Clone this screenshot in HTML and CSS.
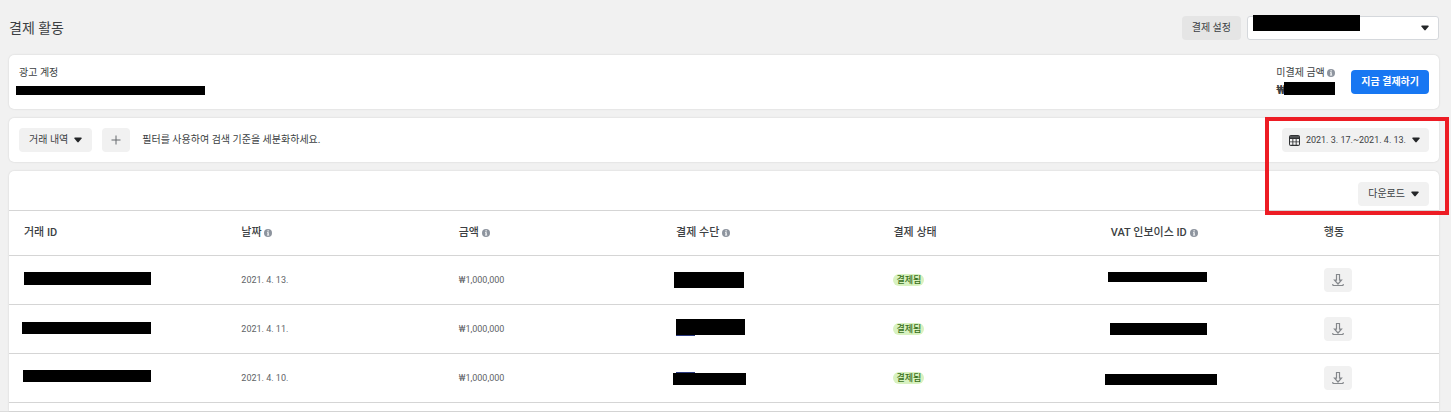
FILE: index.html
```html
<!DOCTYPE html>
<html lang="ko">
<head>
    <meta charset="UTF-8">
    <meta name="viewport" content="width=device-width, initial-scale=1">
    <title>결제 활동</title>
    <link rel="stylesheet" href="styles.css">
</head>
<body>
    <svg class="sprite" aria-hidden="true">
        <symbol id="caret" viewBox="0 0 8 6">
            <path d="M1 .5h6q1 0 .6 1L4.7 5.1q-.7.7-1.4 0L.4 1.5Q0 .5 1 .5z" fill="currentColor"/>
        </symbol>
        <symbol id="info" viewBox="0 0 8 8">
            <circle cx="4" cy="4" r="4" fill="#8d949e"/>
            <path d="M3.5 1.3h1.2v1.2H3.5zM3 3.2h1.7v2.5h.5v.8H3v-.8h.5V4H3z" fill="#fff"/>
        </symbol>
        <symbol id="download" viewBox="0 0 12 14">
            <path d="M4.5 1.5h3v5.6h2L6 11 2.5 7.1h2zM.8 12.5h10.4M.8 12.5V11M11.2 12.5V11" fill="none" stroke="#85888c" stroke-width="1.2"/>
        </symbol>
    </svg>
    <main class="page">
        <header class="page-head">
            <h1>결제 활동</h1>
            <div class="head-actions">
                <button type="button" class="btn btn-dark">결제 설정</button>
                <div class="account-select">
                    <select aria-label="광고 계정 선택">
                        <option></option>
                    </select>
                    <svg class="caret"><use href="#caret"/></svg>
                    <span class="mask mask-select"></span>
                </div>
            </div>
        </header>

        <section class="card account">
            <div class="account-info">
                <div class="label">광고 계정</div>
                <div class="value"><span class="mask mask-account"></span></div>
            </div>
            <div class="account-pay">
                <div class="balance">
                    <div class="label">미결제 금액 <svg class="info"><use href="#info"/></svg></div>
                    <div class="value">₩<span class="mask mask-balance"></span></div>
                </div>
                <button type="button" class="btn btn-primary">지금 결제하기</button>
            </div>
        </section>

        <section class="card filters">
            <button type="button" class="btn">거래 내역 <svg class="caret"><use href="#caret"/></svg></button>
            <button type="button" class="btn btn-icon" aria-label="필터 추가">
                <svg class="plus" viewBox="0 0 10 10"><path d="M5 .5v9M.5 5h9" fill="none" stroke="#65686c"/></svg>
            </button>
            <span class="hint">필터를 사용하여 검색 기준을 세분화하세요.</span>
            <button type="button" class="btn btn-date">
                <svg class="calendar" viewBox="0 0 11 11">
                    <path d="M2 0h7q2 0 2 2v7q0 2-2 2H2q-2 0-2-2V2q0-2 2-2z" fill="#303234"/>
                    <path d="M1 1.6h9v.7H1z" fill="#8b8d8f"/>
                    <path d="M1 4h2.4v2.4H1zM4.3 4h2.4v2.4H4.3zM7.6 4H10v2.4H7.6zM1 7.3h2.4v2.4H1zM4.3 7.3h2.4v2.4H4.3zM7.6 7.3H10v2.4H7.6z" fill="#f5f5f5"/>
                </svg>
                2021. 3. 17.~2021. 4. 13.
                <svg class="caret"><use href="#caret"/></svg>
            </button>
            <div class="highlight"></div>
        </section>

        <section class="card transactions">
            <div class="toolbar">
                <button type="button" class="btn">다운로드 <svg class="caret"><use href="#caret"/></svg></button>
            </div>
            <table>
                <colgroup>
                    <col class="col"><col class="col"><col class="col"><col class="col"><col class="col">
                    <col class="col-vat">
                    <col>
                </colgroup>
                <thead>
                    <tr>
                        <th>거래 ID</th>
                        <th>날짜 <svg class="info"><use href="#info"/></svg></th>
                        <th>금액 <svg class="info"><use href="#info"/></svg></th>
                        <th>결제 수단 <svg class="info"><use href="#info"/></svg></th>
                        <th>결제 상태</th>
                        <th>VAT 인보이스 ID <svg class="info"><use href="#info"/></svg></th>
                        <th>행동</th>
                    </tr>
                </thead>
                <tbody>
                    <tr>
                        <td><span class="mask mask-id-1"></span></td>
                        <td>2021. 4. 13.</td>
                        <td>₩1,000,000</td>
                        <td><span class="mask mask-method-1"></span></td>
                        <td><span class="badge">결제됨</span></td>
                        <td><span class="mask mask-vat-1"></span></td>
                        <td><button type="button" class="btn btn-icon" aria-label="다운로드"><svg class="download"><use href="#download"/></svg></button></td>
                    </tr>
                    <tr>
                        <td><span class="mask mask-id-2"></span></td>
                        <td>2021. 4. 11.</td>
                        <td>₩1,000,000</td>
                        <td><span class="mask mask-method-2"></span></td>
                        <td><span class="badge">결제됨</span></td>
                        <td><span class="mask mask-vat-2"></span></td>
                        <td><button type="button" class="btn btn-icon" aria-label="다운로드"><svg class="download"><use href="#download"/></svg></button></td>
                    </tr>
                    <tr>
                        <td><span class="mask mask-id-3"></span></td>
                        <td>2021. 4. 10.</td>
                        <td>₩1,000,000</td>
                        <td><span class="mask mask-method-3"></span></td>
                        <td><span class="badge">결제됨</span></td>
                        <td><span class="mask mask-vat-3"></span></td>
                        <td><button type="button" class="btn btn-icon" aria-label="다운로드"><svg class="download"><use href="#download"/></svg></button></td>
                    </tr>
                </tbody>
            </table>
        </section>
    </main>
</body>
</html>
```
FILE: styles.css
```css
* {
    box-sizing: border-box;
}
body {
    margin: 0;
    background: #f1f1f1;
    color: #3c3f43;
    font-family: Roboto, "Noto Sans CJK KR", sans-serif;
    font-size: 10px;
    line-height: 14px;
}
.sprite {
    display: none;
}
.page {
    display: flex;
    flex-direction: column;
    gap: 9px;
    padding: 16px 12px 0 9px;
    border-bottom: 1px solid #dcdcdc;
}
.page-head {
    display: flex;
    align-items: center;
    justify-content: space-between;
    margin-bottom: 6px;
}
h1 {
    margin: 0;
    font-size: 14px;
    line-height: 24px;
    font-weight: 400;
}
.head-actions {
    display: flex;
    gap: 6px;
}
.btn {
    display: inline-flex;
    align-items: center;
    justify-content: center;
    gap: 6px;
    height: 24px;
    padding: 0 10px;
    border: none;
    border-radius: 4px;
    background: #f1f1f1;
    color: #3c3f43;
    font-family: inherit;
    font-size: 10px;
    line-height: 14px;
    white-space: nowrap;
    cursor: pointer;
}
.btn:hover {
    background: #e8e8e8;
}
.btn-dark {
    background: #e5e5e5;
}
.btn-primary {
    background: #1877f2;
    color: #fff;
    font-weight: 700;
}
.btn-primary:hover {
    background: #166fe5;
}
.btn-icon {
    width: 28px;
    padding: 0;
}
.caret {
    width: 8px;
    height: 6px;
    color: #242628;
}
.info {
    width: 8px;
    height: 8px;
    vertical-align: -1px;
}
.account-select {
    position: relative;
    width: 192px;
}
.account-select select {
    display: block;
    width: 100%;
    height: 24px;
    padding: 0 24px 0 8px;
    border: 1px solid #d5d8dc;
    border-radius: 3px;
    background: #fff;
    font: inherit;
    appearance: none;
}
.account-select .caret {
    position: absolute;
    top: 9px;
    right: 10px;
    pointer-events: none;
}
.card {
    position: relative;
    border-radius: 5px;
    background: #fff;
    box-shadow: 0 0 2px rgba(0, 0, 0, 0.15);
}
.account {
    display: flex;
    align-items: center;
    justify-content: space-between;
    padding: 10px;
}
.account-pay {
    display: flex;
    align-items: center;
    gap: 16px;
}
.label {
    line-height: 16px;
}
.value {
    position: relative;
    height: 18px;
    font-size: 12px;
    line-height: 18px;
    font-weight: 700;
}
.filters {
    display: flex;
    align-items: center;
    gap: 10px;
    padding: 10px;
}
.hint {
    margin-left: 2px;
}
.btn-date {
    margin-left: auto;
    padding: 0 9px 0 7px;
    font-size: 9px;
}
.calendar {
    width: 11px;
    height: 11px;
}
.plus {
    width: 10px;
    height: 10px;
}
.highlight {
    position: absolute;
    top: -1px;
    right: -10px;
    z-index: 2;
    width: 184px;
    height: 98px;
    border: 4px solid #ed1c24;
    pointer-events: none;
}
.transactions {
    padding-bottom: 8px;
    border-radius: 5px 5px 0 0;
}
.toolbar {
    display: flex;
    justify-content: flex-end;
    padding: 11px 10px 4px;
}
table {
    width: 100%;
    table-layout: fixed;
    border-collapse: separate;
    border-spacing: 0;
    border-top: 1px solid #d5d5d5;
}
.col {
    width: 15.2%;
}
.col-vat {
    width: 14.9%;
}
th, td {
    position: relative;
    padding: 0 0 0 15px;
    border-bottom: 1px solid #d5d5d5;
    text-align: left;
    vertical-align: middle;
}
th {
    height: 45px;
    font-size: 11px;
    font-weight: 500;
    white-space: nowrap;
}
td {
    height: 49px;
    color: #606367;
    font-size: 9px;
}
td .btn {
    vertical-align: middle;
}
.download {
    width: 12px;
    height: 14px;
}
.badge {
    display: inline-block;
    padding: 0 3px;
    border-radius: 6px;
    background: #d8f2c0;
    color: #39701b;
    line-height: 12px;
    font-weight: 500;
}

/* blacked-out private data */
.mask {
    position: absolute;
    background: #000;
}
.mask-select {
    top: -1px;
    left: 6px;
    width: 107px;
    height: 16px;
}
.mask-account {
    top: 5px;
    left: -3px;
    width: 189px;
    height: 9px;
}
.mask-balance {
    top: 1px;
    left: 8px;
    width: 51px;
    height: 13px;
}
.mask-id-1 {
    top: 16px;
    left: 15px;
    width: 127px;
    height: 13px;
}
.mask-id-2 {
    top: 17px;
    left: 13px;
    width: 129px;
    height: 12px;
}
.mask-id-3 {
    top: 16px;
    left: 14px;
    width: 128px;
    height: 12px;
}
.mask-method-1 {
    top: 16px;
    left: 13px;
    width: 70px;
    height: 16px;
}
.mask-method-2 {
    top: 14px;
    left: 15px;
    width: 69px;
    height: 16px;
}
.mask-method-3 {
    top: 19px;
    left: 12px;
    width: 73px;
    height: 12px;
}
.mask-method-2::after,
.mask-method-3::before {
    content: "";
    position: absolute;
    left: 0;
    width: 19px;
    height: 1px;
    background: #2b3a80;
}
.mask-method-2::after {
    top: 100%;
}
.mask-method-3::before {
    bottom: 100%;
    left: 3px;
}
.mask-vat-1 {
    top: 16px;
    left: 12px;
    width: 99px;
    height: 10px;
}
.mask-vat-2 {
    top: 18px;
    left: 14px;
    width: 97px;
    height: 12px;
}
.mask-vat-3 {
    top: 20px;
    left: 9px;
    width: 112px;
    height: 11px;
}
```
